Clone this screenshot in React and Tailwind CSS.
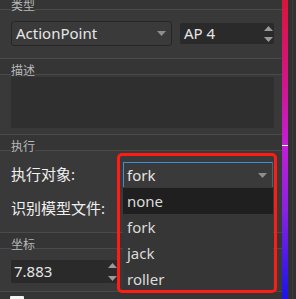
import React from "react";

const FONT = { fontFamily: '"Noto Sans", "Noto Sans CJK SC", sans-serif' };

function Strip({ title, h = "h-[17px]", top = true }) {
  return (
    <div className={`${h} ${top ? "border-t border-[#4a4a4a]" : ""} bg-[#353535] flex items-end shrink-0`}>
      <div className="w-[11px] h-px bg-[#4a4a4a]" />
      <span className="relative z-10 text-[12px] leading-[14px] mb-[-3px] text-[#b9b9b9]">{title}</span>
      <div className="flex-1 h-px bg-[#4a4a4a]" />
    </div>
  );
}

function DownArrow({ color = "#8e8e8e" }) {
  return (
    <svg width="9" height="5" viewBox="0 0 9 5">
      <polygon points="0,0 9,0 4.5,5" fill={color} />
    </svg>
  );
}

function SpinArrows() {
  return (
    <div className="flex flex-col items-center justify-between h-full pt-[3px] pb-[2px]">
      <svg width="9" height="5" viewBox="0 0 9 5">
        <polygon points="0,5 9,5 4.5,0" fill="#9a9a9a" />
      </svg>
      <svg width="9" height="5" viewBox="0 0 9 5">
        <polygon points="0,0 9,0 4.5,5" fill="#9a9a9a" />
      </svg>
    </div>
  );
}

export default function App() {
  return (
    <div className="relative w-[296px] h-[299px] overflow-hidden flex bg-[#393939]" style={FONT}>
      <div className="w-[282px] flex flex-col shrink-0">
        <Strip title="类型" h="h-[10px]" top={false} />
        <div className="h-[48px] shrink-0 flex pl-[11px] pr-[8px] pt-[11px] items-start">
          <div className="w-[161px] h-[25px] rounded-[3px] border border-[#262626] bg-[#3a3a3a] flex items-center pl-[4px] pr-[5px]">
            <span className="flex-1 text-[15px] text-[#e6e6e6] leading-none">ActionPoint</span>
            <DownArrow />
          </div>
          <div className="ml-[8px] mt-[2px] w-[94px] h-[21px] rounded-[2px] bg-[#2a2a2a] flex items-center pl-[4px] pr-[1px]">
            <span className="flex-1 text-[15px] text-[#e6e6e6] leading-none">AP 4</span>
            <SpinArrows />
          </div>
        </div>
        <Strip title="描述" />
        <div className="h-[59px] shrink-0 pl-[11px] pr-[8px] pt-[2px]">
          <div className="h-[51px] bg-[#2f2f2f]" />
        </div>
        <Strip title="执行" />
        <div className="relative h-[81px] shrink-0 pl-[11px] pr-[9px] pt-[11px] flex flex-col gap-[9px]">
          <div className="flex items-center h-[25px]">
            <span className="w-[112px] text-[15px] text-[#f0f0f0] leading-none">执行对象:</span>
            <div className="w-[150px] h-[25px] bg-[#3a3a3a] border-t border-l border-[#3d8fdc] border-r border-r-[#56606a] flex items-center pl-[3px] pr-[5px]">
              <span className="flex-1 text-[15px] text-[#e6e6e6] leading-none">fork</span>
              <DownArrow />
            </div>
          </div>
          <div className="flex items-center h-[25px]">
            <span className="w-[112px] text-[15px] text-[#f0f0f0] leading-none">识别模型文件:</span>
            <div className="w-[150px] h-[25px] bg-[#3a3a3a]" />
          </div>
          <div className="absolute z-20 left-[123px] top-[37px] w-[150px] bg-[#363636] flex flex-col text-[15px] text-[#dcdcdc]">
            <div className="h-[26px] bg-[#1f1f1f] flex items-center pl-[4px]">none</div>
            <div className="h-[26px] flex items-center pl-[4px]">fork</div>
            <div className="h-[26px] flex items-center pl-[4px]">jack</div>
            <div className="h-[26px] flex items-center pl-[4px]">roller</div>
          </div>
        </div>
        <Strip title="坐标" />
        <div className="h-[42px] shrink-0 pl-[11px] pt-[11px]">
          <div className="w-[107px] h-[23px] rounded-[2px] bg-[#2a2a2a] flex items-center pl-[3px] pr-[1px]">
            <span className="flex-1 text-[15px] text-[#e6e6e6] leading-none">7.883</span>
            <SpinArrows />
          </div>
        </div>
        <div className="flex-1 border-t border-[#4a4a4a] bg-[#353535] pl-[10px] pt-[4px]">
          <div className="w-[14px] h-[14px] bg-[#f4f4f4] rounded-[1px]" />
        </div>
      </div>
      <div
        className="relative w-[6px] h-full shrink-0"
        style={{
          background:
            "linear-gradient(to bottom, #dc1438 0%, #d0168a 28%, #c41ed4 48%, #8a22e0 70%, #1a14e8 100%)",
        }}
      >
        <div className="absolute left-0 right-0 top-[145px] h-px bg-white" />
      </div>
      <div className="flex-1 bg-[#313131] flex">
        <div className="w-[4px]" />
        <div className="w-px bg-[#3b3b3b]" />
      </div>
      <div className="absolute z-30 left-[117px] top-[153px] w-[160px] h-[140px] border-[3px] border-[#ff1c14] rounded-[5px]" />
    </div>
  );
}
